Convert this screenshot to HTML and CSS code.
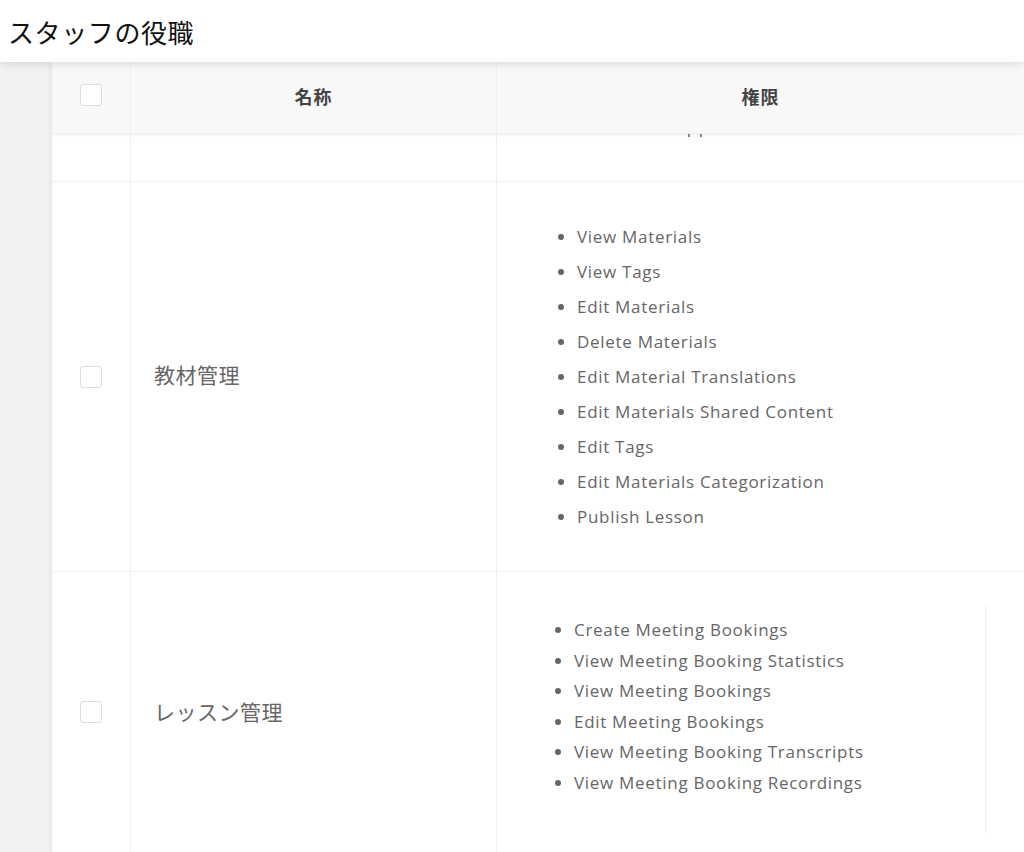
FILE: index.html
```html
<!DOCTYPE html>
<html lang="ja">
<head>
    <meta charset="UTF-8">
    <title>スタッフの役職</title>
    <link rel="stylesheet" href="styles.css">
</head>
<body>

<div class="top-bar">
    <h1 class="page-title">スタッフの役職</h1>
</div>

<div class="content">
    <div class="roles-table">
        <div class="table-head">
            <div class="cell cell-check"><span class="checkbox"></span></div>
            <div class="cell cell-name head-label">名称</div>
            <div class="cell cell-perms head-label">権限</div>
        </div>

        <!-- scrolled row, mostly hidden under the header -->
        <div class="table-row row-cut">
            <div class="cell cell-check"></div>
            <div class="cell cell-name"></div>
            <div class="cell cell-perms"><span class="cut-marks"></span></div>
        </div>

        <div class="table-row">
            <div class="cell cell-check"><span class="checkbox"></span></div>
            <div class="cell cell-name role-name">教材管理</div>
            <div class="cell cell-perms">
                <ul class="perm-list">
                    <li>View Materials</li>
                    <li>View Tags</li>
                    <li>Edit Materials</li>
                    <li>Delete Materials</li>
                    <li>Edit Material Translations</li>
                    <li>Edit Materials Shared Content</li>
                    <li>Edit Tags</li>
                    <li>Edit Materials Categorization</li>
                    <li>Publish Lesson</li>
                </ul>
            </div>
        </div>

        <div class="table-row row-last">
            <div class="cell cell-check"><span class="checkbox"></span></div>
            <div class="cell cell-name role-name">レッスン管理</div>
            <div class="cell cell-perms">
                <div class="perm-box">
                    <ul class="perm-list compact">
                        <li>Create Meeting Bookings</li>
                        <li>View Meeting Booking Statistics</li>
                        <li>View Meeting Bookings</li>
                        <li>Edit Meeting Bookings</li>
                        <li>View Meeting Booking Transcripts</li>
                        <li>View Meeting Booking Recordings</li>
                    </ul>
                </div>
            </div>
        </div>
    </div>
</div>

</body>
</html>
```

FILE: styles.css
```css
body {
    margin: 0;
    padding: 0;
    background: #f2f2f2;
    font-family: "Open Sans", "Noto Sans CJK JP", sans-serif;
    height: 852px;
    overflow: hidden;
}

.top-bar {
    position: relative;
    z-index: 2;
    height: 62px;
    background: #fff;
    box-shadow: 0 2px 8px rgba(0, 0, 0, 0.12);
    display: flex;
    align-items: center;
}

.page-title {
    margin: 0 0 0 8px;
    font-family: "Noto Sans CJK JP", sans-serif;
    font-weight: normal;
    font-size: 26px;
    letter-spacing: 0.6px;
    color: #111;
}

.content {
    margin-left: 52px;
    background: #fff;
    box-shadow: -2px 0 4px rgba(0, 0, 0, 0.05);
    height: 790px;
    overflow: hidden;
}

.table-head,
.table-row {
    display: grid;
    grid-template-columns: 79px 366px 1fr;
    border-bottom: 1px solid #efefef;
}

.table-head {
    position: relative;
    z-index: 1;
    height: 71px;
    background: #f8f8f8;
    box-shadow: 0 2px 3px rgba(0, 0, 0, 0.04);
}

.cell {
    display: flex;
    align-items: center;
}

.cell-check {
    justify-content: center;
    border-right: 1px solid #f1f1f1;
}

.cell-name {
    border-right: 1px solid #f1f1f1;
}

.table-head .cell-check {
    align-items: flex-start;
    padding-top: 22px;
}

.head-label {
    justify-content: center;
    padding-bottom: 4px;
    font-family: "Noto Sans CJK JP", sans-serif;
    font-weight: bold;
    font-size: 18px;
    letter-spacing: 1px;
    color: #444;
}

.checkbox {
    display: inline-block;
    width: 20px;
    height: 20px;
    border: 1px solid #ddd;
    border-radius: 3px;
    background: #fff;
}

.row-cut {
    height: 47px;
}

.cut-marks {
    align-self: flex-start;
    margin-left: 191px;
    width: 14px;
    height: 3px;
    background:
        linear-gradient(#888, #888) left top / 2px 3px no-repeat,
        linear-gradient(#888, #888) right top / 2px 3px no-repeat;
}

.role-name {
    padding-left: 23px;
    font-family: "Noto Sans CJK JP", sans-serif;
    font-size: 21px;
    letter-spacing: 0.5px;
    color: #666;
}

.table-row .role-name {
    padding-bottom: 5px;
}

.perm-list {
    margin: 37px 0;
    padding-left: 80px;
    list-style: disc;
    font-size: 17px;
    letter-spacing: 0.7px;
    color: #666;
}

.perm-list li {
    line-height: 35px;
}

.perm-list li::marker {
    color: #666;
    font-size: 17px;
}

.perm-list.compact {
    margin: 10px 0;
    padding-left: 77px;
}

.perm-list.compact li {
    line-height: 30.6px;
}

.row-last {
    height: 284px;
    border-bottom: none;
}

.row-last .cell {
    align-items: flex-start;
}

.row-last .cell-check {
    padding-top: 129px;
}

.table-row.row-last .role-name {
    padding-top: 124px;
    padding-bottom: 0;
}

.perm-box {
    margin-top: 33px;
    width: 488px;
    height: 229px;
    border-right: 1px solid #f1f1f1;
}
```
